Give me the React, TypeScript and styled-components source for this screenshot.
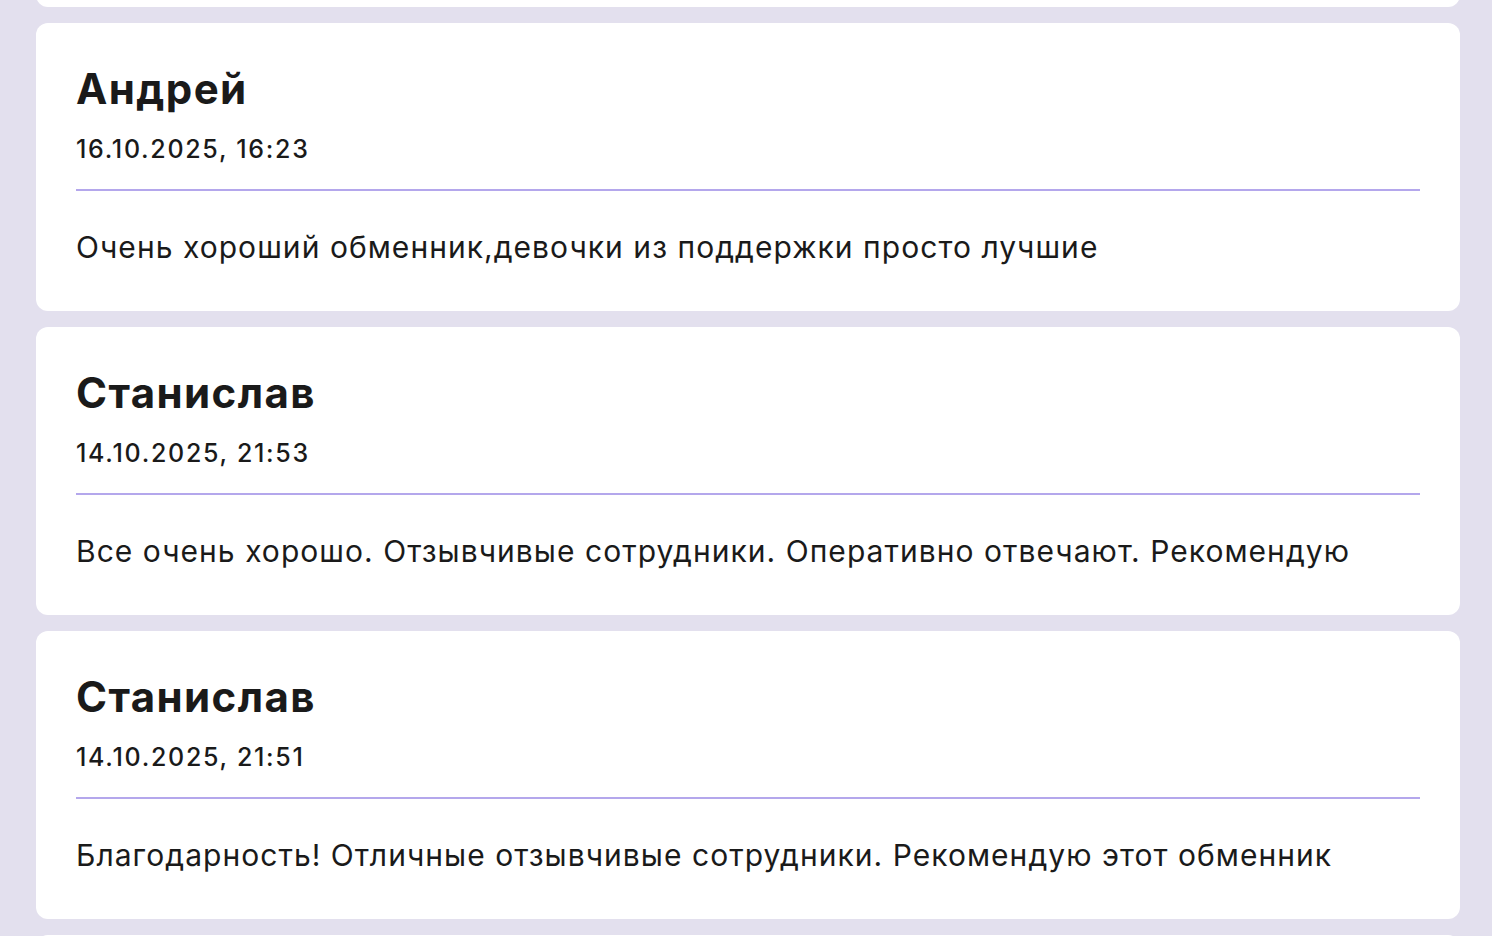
import React from "react";
import styled, { createGlobalStyle } from "styled-components";

const GlobalStyle = createGlobalStyle`
  html, body {
    margin: 0;
    padding: 0;
    background-color: #e3e0ee;
    font-family: Inter, "Noto Sans", sans-serif;
    color: #1a1a1a;
    overflow: hidden;
  }
`;

const Page = styled.main`
  height: 936px;
  overflow: hidden;
  padding: 0 32px 0 36px;
`;

const ReviewList = styled.div`
  display: flex;
  flex-direction: column;
  gap: 16px;
  margin-top: -281px;
`;

const Card = styled.article`
  background-color: #ffffff;
  border-radius: 12px;
  height: 288px;
  box-sizing: border-box;
  padding: 42px 40px 0;
  display: flex;
  flex-direction: column;
`;

const Name = styled.h3`
  margin: 0;
  font-size: 42px;
  font-weight: 700;
  line-height: 48px;
  letter-spacing: 1.4px;
`;

const Date = styled.div`
  margin-top: 20px;
  font-size: 25px;
  line-height: 32px;
  font-weight: 500;
  letter-spacing: 1.7px;
`;

const Divider = styled.hr`
  margin: 24px 0 0;
  border: none;
  height: 2px;
  background-color: #b4a7ec;
`;

const Text = styled.p`
  margin: 38px 0 0;
  font-size: 30px;
  line-height: 36px;
  font-weight: 400;
  letter-spacing: 1.04px;
`;

type Review = {
  name: string;
  date: string;
  text: string;
};

const reviews: Review[] = [
  {
    name: "Мария",
    date: "17.10.2025, 10:05",
    text: "Быстро и надёжно, спасибо!",
  },
  {
    name: "Андрей",
    date: "16.10.2025, 16:23",
    text: "Очень хороший обменник,девочки из поддержки просто лучшие",
  },
  {
    name: "Станислав",
    date: "14.10.2025, 21:53",
    text: "Все очень хорошо. Отзывчивые сотрудники. Оперативно отвечают. Рекомендую",
  },
  {
    name: "Станислав",
    date: "14.10.2025, 21:51",
    text: "Благодарность! Отличные отзывчивые сотрудники. Рекомендую этот обменник",
  },
  {
    name: "Игорь",
    date: "12.10.2025, 09:14",
    text: "Всё прошло отлично",
  },
];

const App = () => {
  return (
    <>
      <GlobalStyle />
      <Page>
        <ReviewList>
          {reviews.map((r, i) => (
            <Card key={i}>
              <Name>{r.name}</Name>
              <Date>{r.date}</Date>
              <Divider />
              <Text>{r.text}</Text>
            </Card>
          ))}
        </ReviewList>
      </Page>
    </>
  );
};

export default App;
